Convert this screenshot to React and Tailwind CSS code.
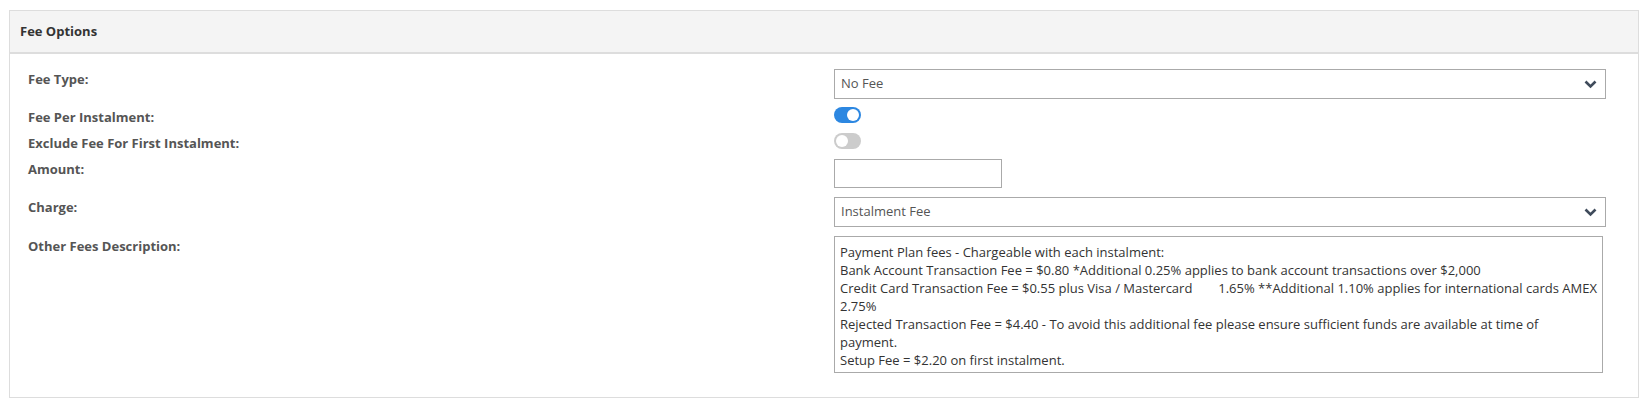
import React from 'react';

const desc = `Payment Plan fees - Chargeable with each instalment:
Bank Account Transaction Fee = $0.80 *Additional 0.25% applies to bank account transactions over $2,000
Credit Card Transaction Fee = $0.55 plus Visa / Mastercard\t1.65% **Additional 1.10% applies for international cards AMEX 2.75%
Rejected Transaction Fee = $4.40 - To avoid this additional fee please ensure sufficient funds are available at time of payment.
Setup Fee = $2.20 on first instalment.`;

function Chevron() {
  return (
    <svg width="13" height="9" viewBox="0 0 13 9" className="shrink-0">
      <polyline points="1.5,1.5 6.5,6.5 11.5,1.5" fill="none" stroke="#3f4b5b" strokeWidth="2.6" />
    </svg>
  );
}

function Select({ value }) {
  return (
    <div className="flex h-[30px] w-[772px] items-center justify-between border border-[#aaaaaa] bg-white pl-[6px] pr-[8px] text-[13px] text-[#555]">
      <span>{value}</span>
      <Chevron />
    </div>
  );
}

function Toggle({ on }) {
  return (
    <div className={`flex h-[16px] w-[27px] items-center rounded-full px-[2px] ${on ? 'justify-end bg-[#2c87e1]' : 'justify-start bg-[#cccccc]'}`}>
      <div className="h-[12px] w-[12px] rounded-full bg-white" />
    </div>
  );
}

function Row({ label, children, className = '' }) {
  return (
    <div className={`flex items-start ${className}`}>
      <div className="w-[806px] shrink-0 text-[13px] font-bold leading-[20px] text-[#555]">{label}</div>
      <div>{children}</div>
    </div>
  );
}

export default function App() {
  return (
    <div className="h-[406px] w-[1647px] bg-white pl-[9px] pt-[10px]" style={{ fontFamily: '"Open Sans", sans-serif' }}>
      <div className="h-[388px] w-[1630px] border border-[#dddddd]">
        <div className="flex h-[43px] items-center border-b-2 border-[#dddddd] bg-[#f4f4f4] pl-[10px] text-[13px] font-bold text-[#333]">
          Fee Options
        </div>
        <div className="pl-[18px] pt-[15px]">
          <Row label="Fee Type:" className="mb-[8px]">
            <Select value="No Fee" />
          </Row>
          <Row label="Fee Per Instalment:" className="mb-[6px] h-[20px]">
            <Toggle on />
          </Row>
          <Row label="Exclude Fee For First Instalment:" className="mb-[6px] h-[20px]">
            <Toggle />
          </Row>
          <Row label="Amount:" className="mb-[9px]">
            <div className="h-[29px] w-[168px] border border-[#aaaaaa]" />
          </Row>
          <Row label="Charge:" className="mb-[9px]">
            <Select value="Instalment Fee" />
          </Row>
          <Row label="Other Fees Description:">
            <textarea
              readOnly
              defaultValue={desc}
              className="block h-[137px] w-[769px] resize-none border border-[#aaaaaa] px-[5px] py-[6px] text-[13px] leading-[18px] text-[#333] outline-none"
              style={{ fontFamily: '"Open Sans", sans-serif', tabSize: 8 }}
            />
          </Row>
        </div>
      </div>
    </div>
  );
}
